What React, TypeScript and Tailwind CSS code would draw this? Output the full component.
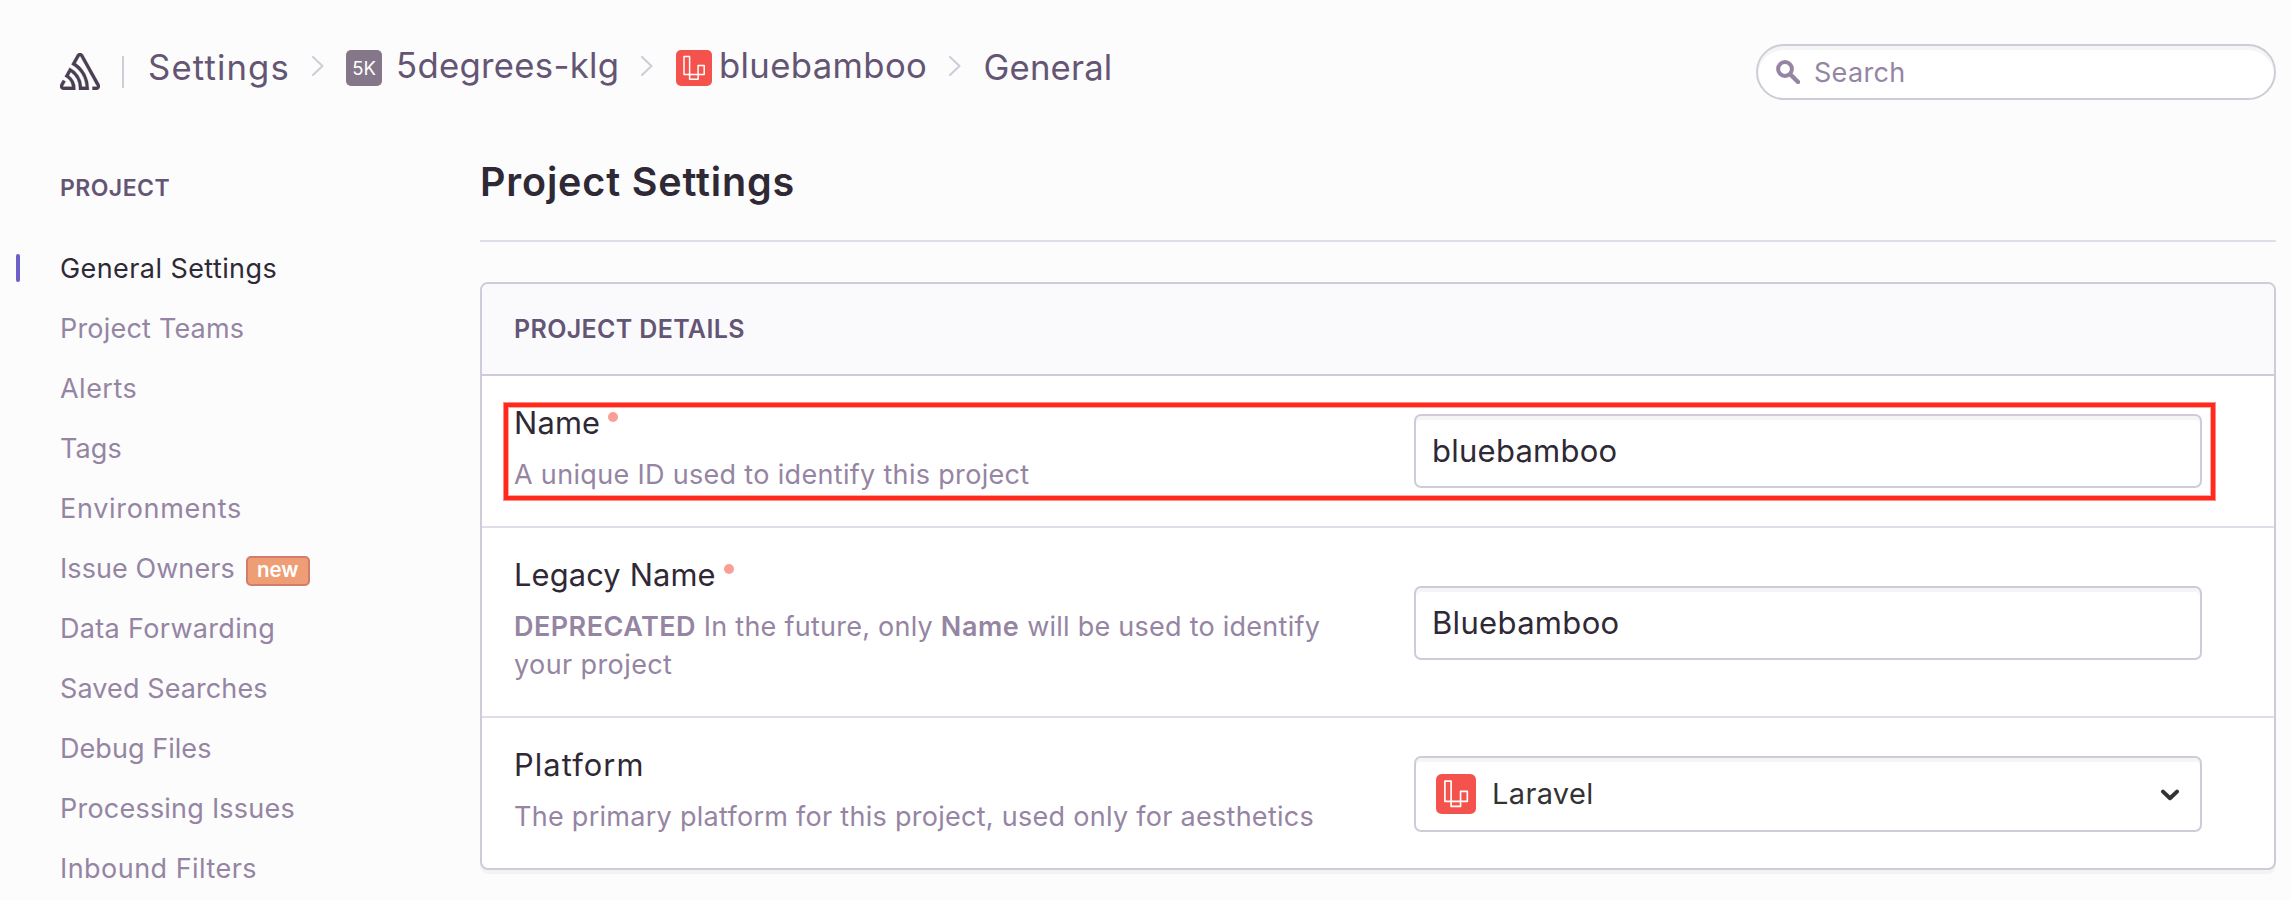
import type { ReactNode } from "react";

const navItems = [
  { label: "General Settings", tracking: "tracking-[0.42px]", active: true },
  { label: "Project Teams", tracking: "tracking-[0.2px]" },
  { label: "Alerts", tracking: "tracking-[0.48px]" },
  { label: "Tags", tracking: "tracking-[0.1px]" },
  { label: "Environments", tracking: "tracking-[0.7px]" },
  { label: "Issue Owners", tracking: "tracking-[0.07px]", badge: "new" },
  { label: "Data Forwarding", tracking: "tracking-[0.32px]" },
  { label: "Saved Searches", tracking: "tracking-[0.1px]" },
  { label: "Debug Files", tracking: "tracking-[0.05px]" },
  { label: "Processing Issues", tracking: "tracking-[0.22px]" },
  { label: "Inbound Filters", tracking: "tracking-[0.46px]" },
];

function SentryLogo() {
  return (
    <svg
      className="mt-[9px] h-[37px] w-10 shrink-0"
      viewBox="0 1.4 24 21.2"
      preserveAspectRatio="none"
      fill="#493e54"
      stroke="#493e54"
      strokeWidth="0.2"
    >
      <path d="M13.91 2.505c-.873-1.448-2.972-1.448-3.844 0L6.904 7.92a15.478 15.478 0 0 1 8.53 12.811h-2.221A13.301 13.301 0 0 0 5.784 9.814l-2.926 5.06a7.65 7.65 0 0 1 4.435 5.848H2.194a.365.365 0 0 1-.298-.534l1.413-2.402a5.16 5.16 0 0 0-1.614-.913L.296 19.275a2.182 2.182 0 0 0 .812 2.999 2.24 2.24 0 0 0 1.086.288h6.983a9.322 9.322 0 0 0-3.845-8.318l1.11-1.922a11.47 11.47 0 0 1 4.95 10.24h5.915a17.242 17.242 0 0 0-7.885-15.28l2.244-3.845a.37.37 0 0 1 .504-.13c.255.14 9.75 16.708 9.928 16.9a.365.365 0 0 1-.327.543h-2.287c.029.612.029 1.223 0 1.831h2.297a2.206 2.206 0 0 0 1.922-3.31z" />
    </svg>
  );
}

function LaravelIcon({ className }: { className: string }) {
  return (
    <svg className={className} viewBox="0 0 36 36" fill="none">
      <rect width="36" height="36" rx="5" fill="#f4534d" />
      <path
        d="M13.6 29.2V6.4H8v18.2h20.2v-9h-6.1v13.6z"
        stroke="#fff"
        strokeWidth="1.5"
        strokeLinejoin="round"
      />
    </svg>
  );
}

function Separator() {
  return (
    <svg className="mt-3 h-5 w-3 shrink-0" viewBox="0 0 12 20" fill="none">
      <path
        d="M1 1l9.5 9L1 19"
        stroke="#d1cad8"
        strokeWidth="2"
        strokeLinecap="round"
        strokeLinejoin="round"
      />
    </svg>
  );
}

function Header() {
  return (
    <header className="flex h-[158px] items-start pt-11 pr-[14px] pl-[60px] text-[34.7px] leading-[42px] whitespace-nowrap text-[#645574]">
      <SentryLogo />
      <div className="mt-3 ml-[22px] h-8 w-0.5 bg-[#d1cad8]" />
      <span className="mt-[1.5px] ml-[24px] w-[164px] tracking-[1.15px]">Settings</span>
      <Separator />
      <span className="mt-1.5 ml-[22px] flex h-9 w-9 items-center justify-center rounded-[5px] bg-[#847789] text-[18.5px] leading-none text-white">
        5K
      </span>
      <span className="-mt-[0.5px] ml-[14px] w-[245px] tracking-[0.3px]">5degrees-klg</span>
      <Separator />
      <LaravelIcon className="mt-1.5 ml-[23px] h-9 w-9 shrink-0" />
      <span className="-mt-[0.5px] ml-[7px] w-[230px] tracking-[0.36px]">bluebamboo</span>
      <Separator />
      <span className="mt-[1.5px] ml-[22.5px] tracking-[0.15px]">General</span>
      <div className="ml-auto flex h-14 w-[520px] items-center rounded-full border-2 border-[#d1cad8] bg-white pl-[18px] shadow-[inset_0_4px_0_#f5f5f5]">
        <svg className="h-6 w-6 shrink-0" viewBox="0 0 24 24" fill="none" stroke="#9585a3">
          <circle cx="9" cy="9" r="6.9" strokeWidth="4" />
          <path d="M14.5 14.5L22 22" strokeWidth="4.4" strokeLinecap="round" />
        </svg>
        <span className="ml-[14px] text-[27px] leading-none tracking-[0.3px] text-[#9585a3]">
          Search
        </span>
      </div>
    </header>
  );
}

function Sidebar() {
  return (
    <nav className="w-[480px] shrink-0 pt-[18px]">
      <h2 className="pl-[60px] text-[23px] leading-6 font-semibold tracking-[0.45px] text-[#645574]">
        PROJECT
      </h2>
      <ul className="mt-[38px]">
        {navItems.map((item) => (
          <li key={item.label} className="flex h-[60px] items-center pl-4">
            <span
              className={
                item.active ? "h-7 w-1 rounded-[2px] bg-[#6c5fc7]" : "h-7 w-1"
              }
            />
            <span
              className={`mt-0.5 ml-[40px] text-[27px] leading-[38px] whitespace-nowrap ${item.tracking} ${
                item.active ? "text-[#2f2936]" : "text-[#9585a3]"
              }`}
            >
              {item.label}
            </span>
            {item.badge && (
              <span className="mt-[6px] ml-[11px] flex h-[30px] w-16 justify-center rounded-[5px] border-2 border-[#d27d6a] bg-[#ee9d74] text-[20.5px] leading-[23px] font-semibold text-white">
                {item.badge}
              </span>
            )}
          </li>
        ))}
      </ul>
    </nav>
  );
}

function Field({
  label,
  help,
  required,
  height,
  children,
  highlight,
}: {
  label: ReactNode;
  help: ReactNode;
  required?: boolean;
  height: string;
  children: ReactNode;
  highlight?: boolean;
}) {
  return (
    <div
      className={`relative flex border-b-2 border-[#e2dbe8] pl-8 last:border-b-0 ${height}`}
    >
      <div className="w-[900px] pt-7">
        <div className="flex text-[30.8px] leading-[38px] text-[#2f2936]">
          {label}
          {required && (
            <span className="mt-2 ml-2 h-2.5 w-2.5 rounded-full bg-[#fa9e97]" />
          )}
        </div>
        <p className="mt-[14px] text-[27px] leading-[38px] whitespace-nowrap text-[#9585a3]">
          {help}
        </p>
      </div>
      <div className="flex grow items-center pr-[72px]">{children}</div>
      {highlight && (
        <div className="absolute top-[27px] left-[22px] h-[97px] w-[1711px] border-4 border-[#ff2a1c] shadow-[0_0_0_1px_#ff2a1c88,inset_0_0_0_1px_#ff2a1c66]" />
      )}
    </div>
  );
}

const control =
  "w-full rounded-[7px] border-2 border-[#d1cad8] bg-white shadow-[inset_0_4px_0_#f5f5f5]";

function ProjectDetails() {
  return (
    <section className="mt-10 rounded-lg border-2 border-[#d1cad8] bg-white shadow-[0_4px_0_#f3f3f4]">
      <h3 className="flex h-[92px] items-center rounded-t-md border-b-2 border-[#d1cad8] bg-[#fafafc] pt-0.5 pl-8 text-[25px] font-semibold tracking-[0.35px] text-[#645574]">
        PROJECT DETAILS
      </h3>
      <Field
        height="h-[152px]"
        required
        highlight
        label={<span className="tracking-[0.2px]">Name</span>}
        help={
          <span className="tracking-[0.32px]">A unique ID used to identify this project</span>
        }
      >
        <input
          className={`h-[74px] pb-0.5 pl-4 text-[31px] tracking-[0.25px] text-[#2f2936] ${control}`}
          defaultValue="bluebamboo"
        />
      </Field>
      <Field
        height="h-[190px]"
        required
        label={<span className="tracking-[0.16px]">Legacy Name</span>}
        help={
          <span className="tracking-[0.25px]">
            <strong className="font-semibold tracking-[0.45px]">DEPRECATED</strong> In the
            future, only <strong className="font-semibold tracking-[0.55px]">Name</strong>{" "}
            will be used to identify
            <br />
            <span className="tracking-[0.4px]">your project</span>
          </span>
        }
      >
        <input
          className={`mt-0.5 h-[74px] pb-0.5 pl-4 text-[31px] tracking-[0.33px] text-[#2f2936] ${control}`}
          defaultValue="Bluebamboo"
        />
      </Field>
      <Field
        height="h-[150px]"
        label={<span className="tracking-[1.1px]">Platform</span>}
        help={
          <span className="tracking-[0.28px]">
            The primary platform for this project, used only for aesthetics
          </span>
        }
      >
        <div className={`mt-0.5 flex h-[76px] items-center pl-5 ${control}`}>
          <LaravelIcon className="h-10 w-10" />
          <span className="ml-4 text-[29px] tracking-[0.35px] text-[#333]">Laravel</span>
          <svg className="mt-0.5 mr-5 ml-auto h-3 w-5" viewBox="0 0 20 12" fill="none">
            <path
              d="M3 2.6l7 6.6 7-6.6"
              stroke="#333"
              strokeWidth="4"
              strokeLinecap="round"
              strokeLinejoin="round"
            />
          </svg>
        </div>
      </Field>
    </section>
  );
}

export default function App() {
  return (
    <div className="h-[900px] w-[2290px] overflow-hidden bg-[#fcfcfc] font-['Inter','Roboto',sans-serif]">
      <Header />
      <div className="flex">
        <Sidebar />
        <main className="grow pr-[14px]">
          <h1 className="border-b-2 border-[#e2dbe8] pb-[34px] text-[39.5px] leading-[48px] font-semibold tracking-[0.85px] text-[#2f2936]">
            Project Settings
          </h1>
          <ProjectDetails />
        </main>
      </div>
    </div>
  );
}
